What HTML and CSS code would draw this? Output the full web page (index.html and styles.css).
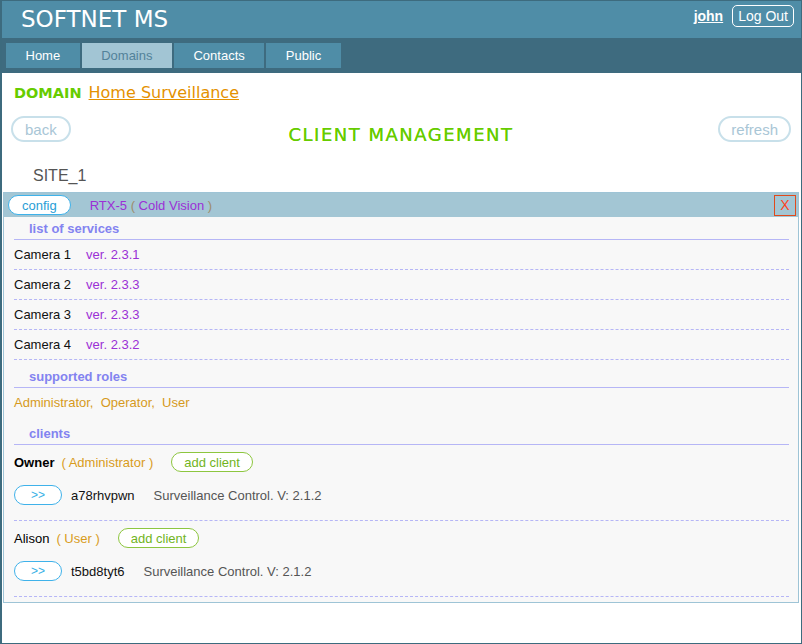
FILE: index.html
```html
<!DOCTYPE html>
<html lang="en">
<head>
<meta charset="utf-8">
<title>SOFTNET MS - Client Management</title>
<link rel="stylesheet" href="styles.css">
</head>
<body>
<div class="page">
  <header class="topbar">
    <div class="brand">SOFTNET MS</div>
    <div class="user">
      <a class="username">john</a>
      <button class="logout">Log Out</button>
    </div>
  </header>
  <nav class="tabs">
    <a class="tab">Home</a>
    <a class="tab active">Domains</a>
    <a class="tab">Contacts</a>
    <a class="tab">Public</a>
  </nav>
  <main class="content">
    <div class="domain-line">
      <span class="domain-label">DOMAIN</span>
      <a class="domain-name">Home Surveillance</a>
    </div>
    <div class="toolbar">
      <button class="pill-btn back">back</button>
      <h1 class="page-title">CLIENT MANAGEMENT</h1>
      <button class="pill-btn refresh">refresh</button>
    </div>
    <div class="site">SITE_1</div>
    <section class="panel">
      <div class="panel-head">
        <button class="btn-blue">config</button>
        <span class="device">RTX-5 <span class="paren">(</span> Cold Vision <span class="paren">)</span></span>
        <button class="close">X</button>
      </div>
      <div class="panel-body">
        <div class="sec-title first">list of services</div>
        <div class="svc-row"><span class="svc-name">Camera 1</span><span class="ver">ver. 2.3.1</span></div>
        <div class="svc-row"><span class="svc-name">Camera 2</span><span class="ver">ver. 2.3.3</span></div>
        <div class="svc-row"><span class="svc-name">Camera 3</span><span class="ver">ver. 2.3.3</span></div>
        <div class="svc-row"><span class="svc-name">Camera 4</span><span class="ver">ver. 2.3.2</span></div>

        <div class="sec-title">supported roles</div>
        <div class="roles">Administrator,&nbsp; Operator,&nbsp; User</div>

        <div class="sec-title">clients</div>
        <div class="client">
          <div class="client-head">
            <span class="client-name owner">Owner</span>
            <span class="role">( Administrator )</span>
            <button class="btn-green">add client</button>
          </div>
          <div class="client-app">
            <button class="btn-go">&gt;&gt;</button>
            <span class="client-id">a78rhvpwn</span>
            <span class="app-name">Surveillance Control. V: 2.1.2</span>
          </div>
        </div>
        <div class="client">
          <div class="client-head">
            <span class="client-name">Alison</span>
            <span class="role">( User )</span>
            <button class="btn-green">add client</button>
          </div>
          <div class="client-app">
            <button class="btn-go">&gt;&gt;</button>
            <span class="client-id">t5bd8tyt6</span>
            <span class="app-name">Surveillance Control. V: 2.1.2</span>
          </div>
        </div>
      </div>
    </section>
  </main>
</div>
</body>
</html>
```
FILE: styles.css
```css
* { box-sizing: border-box; }

body {
  margin: 0;
  font-family: "Liberation Sans", Arial, sans-serif;
  font-size: 13px;
  color: #111;
  background: #fff;
}

button {
  font-family: "Liberation Sans", Arial, sans-serif;
  font-size: 13px;
  cursor: pointer;
}

.page {
  width: 802px;
  height: 644px;
  border: 1px solid #3d6b7e;
  border-left-width: 2px;
  display: flex;
  flex-direction: column;
  overflow: hidden;
}

/* top bar */
.topbar {
  height: 37px;
  flex: none;
  background: #4f8da7;
  display: flex;
  justify-content: space-between;
  align-items: flex-start;
  padding: 0 7px 0 19px;
}
.brand {
  font-family: "DejaVu Sans", Verdana, sans-serif;
  font-size: 23px;
  line-height: 37px;
  color: #fff;
}
.user {
  display: flex;
  align-items: center;
  gap: 9px;
  margin-top: 4px;
  height: 22px;
}
.username {
  color: #fff;
  font-weight: bold;
  font-size: 14px;
  text-decoration: underline;
}
.logout {
  font-size: 14px;
  color: #fff;
  background: transparent;
  border: 1px solid #fff;
  border-radius: 5px;
  height: 22px;
  padding: 0 5px;
}

/* tabs */
.tabs {
  height: 35px;
  flex: none;
  background: #3e6b7f;
  display: flex;
  gap: 2px;
  padding: 5px 0 0 4px;
}
.tab {
  height: 25px;
  line-height: 25px;
  padding: 0 19.5px;
  background: #4f8da7;
  color: #fff;
  font-size: 13px;
}
.tab.active {
  background: #a2c5d4;
  color: #52829a;
}

/* content */
.content { flex: 1; }

.domain-line {
  display: flex;
  align-items: baseline;
  gap: 7px;
  padding: 10px 0 0 12px;
  height: 30px;
  line-height: 20px;
}
.domain-label {
  font-family: "DejaVu Sans", Verdana, sans-serif;
  font-weight: bold;
  font-size: 14.5px;
  color: #66cc00;
}
.domain-name {
  font-family: "DejaVu Sans", Verdana, sans-serif;
  font-size: 16px;
  color: #e49100;
  text-decoration: underline;
}

.toolbar {
  display: grid;
  grid-template-columns: 1fr auto 1fr;
  align-items: start;
  margin-top: 13px;
  padding: 0 10px 0 9px;
  height: 26px;
}
.pill-btn {
  height: 26px;
  border: 2px solid #c8e0ea;
  border-radius: 13px;
  background: #fff;
  color: #a9c6d6;
  font-size: 15px;
  padding: 0 12px;
}
.pill-btn.back { justify-self: start; }
.pill-btn.refresh { justify-self: end; padding: 0 11px; }
.page-title {
  margin: 9px 0 0;
  font-family: "DejaVu Sans", Verdana, sans-serif;
  font-weight: normal;
  font-size: 18px;
  letter-spacing: 1.5px;
  line-height: 20px;
  color: #66cc00;
  text-shadow: 0 0 0.4px #66cc00;
}

.site {
  padding: 24px 0 6px 31px;
  line-height: 20px;
  font-size: 16px;
  color: #555;
}

/* panel */
.panel {
  margin: 0 2px 0 1px;
  border: 1px solid #9ec4d6;
  background: #f8f8f8;
}
.panel-head {
  height: 24px;
  background: #a3c6d4;
  display: flex;
  align-items: center;
  padding: 0 2px 0 4px;
}
.btn-blue {
  height: 20px;
  border: 1px solid #3fb2ea;
  border-radius: 10px;
  background: #fff;
  color: #2a9ed6;
  padding: 0 13px;
}
.device {
  margin-left: 19px;
  color: #9b30d6;
}
.paren { color: #9c8c6c; }
.close {
  margin-left: auto;
  width: 22px;
  height: 21px;
  border: 1px solid #e04a1c;
  background: transparent;
  color: #ff4422;
  font-size: 14px;
  padding: 0;
}

.panel-body {
  padding: 0 9px 5px 10px;
}
.sec-title {
  height: 23px;
  padding-top: 2px;
  line-height: 20px;
  border-bottom: 1px solid #b6b6f6;
  padding-left: 15px;
  font-weight: bold;
  color: #8383f0;
  margin-top: 5px;
}
.sec-title.first { margin-top: 0; }

.svc-row {
  height: 30px;
  border-bottom: 1px dashed #b6b6f6;
  display: flex;
  align-items: center;
  gap: 15px;
}
.ver { color: #9b30d6; }

.roles {
  height: 29px;
  display: flex;
  align-items: center;
  color: #d69a1c;
}

.client {
  padding: 7px 0 15px;
  border-bottom: 1px dashed #b6b6f6;
}
.client-head {
  height: 20px;
  display: flex;
  align-items: center;
}
.client-name { color: #000; }
.client-name.owner { font-weight: bold; }
.role {
  margin-left: 7px;
  color: #d89c1c;
}
.btn-green {
  margin-left: 18px;
  height: 20px;
  border: 1px solid #8dc63f;
  border-radius: 10px;
  background: #fff;
  color: #72b41e;
  padding: 0 12px;
}
.client-app {
  margin-top: 13px;
  height: 20px;
  display: flex;
  align-items: center;
}
.btn-go {
  width: 48px;
  height: 20px;
  border: 1px solid #3fb2ea;
  border-radius: 10px;
  background: #fff;
  color: #38b0e6;
  font-size: 12px;
  padding: 0;
}
.client-id { margin-left: 9px; }
.app-name {
  margin-left: 19px;
  color: #555;
}
```
